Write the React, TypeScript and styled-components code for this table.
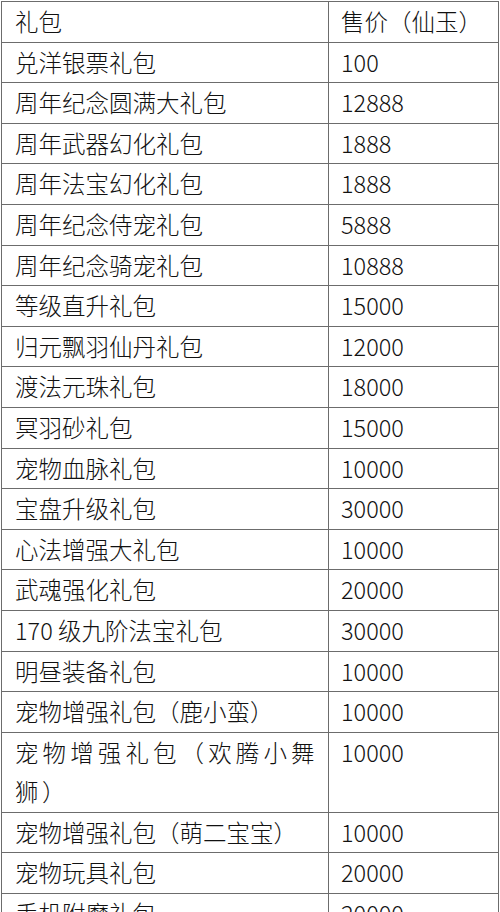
import React from "react";
import styled, { createGlobalStyle } from "styled-components";

// 礼包价格表
const packs: { name: string; price: string; spread?: boolean }[] = [
  { name: "兑洋银票礼包", price: "100" },
  { name: "周年纪念圆满大礼包", price: "12888" },
  { name: "周年武器幻化礼包", price: "1888" },
  { name: "周年法宝幻化礼包", price: "1888" },
  { name: "周年纪念侍宠礼包", price: "5888" },
  { name: "周年纪念骑宠礼包", price: "10888" },
  { name: "等级直升礼包", price: "15000" },
  { name: "归元飘羽仙丹礼包", price: "12000" },
  { name: "渡法元珠礼包", price: "18000" },
  { name: "冥羽砂礼包", price: "15000" },
  { name: "宠物血脉礼包", price: "10000" },
  { name: "宝盘升级礼包", price: "30000" },
  { name: "心法增强大礼包", price: "10000" },
  { name: "武魂强化礼包", price: "20000" },
  { name: "170 级九阶法宝礼包", price: "30000" },
  { name: "明昼装备礼包", price: "10000" },
  { name: "宠物增强礼包（鹿小蛮）", price: "10000" },
  { name: "宠物增强礼包（欢腾小舞狮）", price: "10000", spread: true },
  { name: "宠物增强礼包（萌二宝宝）", price: "10000" },
  { name: "宠物玩具礼包", price: "20000" },
  { name: "手机附魔礼包", price: "20000" },
];

const App: React.FC = () => {
  return (
    <>
      <GlobalStyle />
      <Page>
        <PriceTable>
          <colgroup>
            <NameCol />
            <col />
          </colgroup>
          <tbody>
            <tr>
              <NameCell>礼包</NameCell>
              <PriceCell>售价（仙玉）</PriceCell>
            </tr>
            {packs.map((p) => (
              <tr key={p.name}>
                <NameCell $spread={p.spread}>{p.name}</NameCell>
                <PriceCell>{p.price}</PriceCell>
              </tr>
            ))}
          </tbody>
        </PriceTable>
      </Page>
    </>
  );
};

export default App;

const GlobalStyle = createGlobalStyle`
  html, body {
    margin: 0;
    padding: 0;
    background: #ffffff;
  }
`;

const Page = styled.div`
  width: 500px;
  padding: 1px 0 0 1px;
  box-sizing: border-box;
`;

const PriceTable = styled.table`
  width: 498px;
  border-collapse: collapse;
  table-layout: fixed;
  font-family: "Noto Sans CJK SC", "Noto Sans", sans-serif;
  font-size: 23.5px;
  font-weight: 300;
  color: #111111;
`;

const NameCol = styled.col`
  width: 327px;
`;

const Cell = styled.td`
  border: 1px solid #6c6c6c;
  line-height: 39.6px;
  padding: 0;
  vertical-align: top;
  white-space: nowrap;
`;

const NameCell = styled(Cell)<{ $spread?: boolean }>`
  padding: 0 10px 0 13px;
  white-space: ${(p) => (p.$spread ? "normal" : "nowrap")};
  text-align: ${(p) => (p.$spread ? "justify" : "left")};
  letter-spacing: ${(p) => (p.$spread ? "3.5px" : "0")};
`;

const PriceCell = styled(Cell)`
  padding: 0 4px 0 12px;
`;
